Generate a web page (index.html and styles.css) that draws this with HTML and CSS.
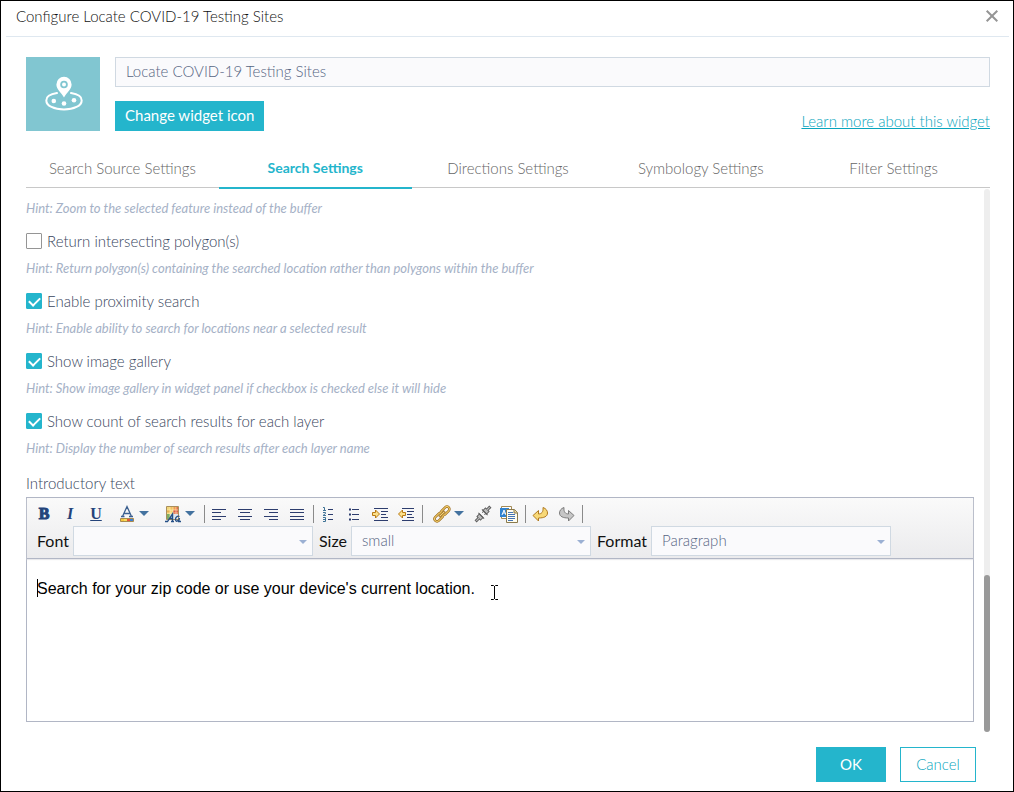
FILE: index.html
```html
<!DOCTYPE html>
<html lang="en">
<head>
    <meta charset="UTF-8">
    <meta name="viewport" content="width=device-width, initial-scale=1.0">
    <title>Configure Locate COVID-19 Testing Sites</title>
    <link rel="stylesheet" href="styles.css">
</head>
<body>
    <div class="dialog">
        <header class="dialog-title">
            <h1>Configure Locate COVID-19 Testing Sites</h1>
            <button class="close" aria-label="Close">
                <svg width="12" height="12" viewBox="0 0 12 12"><path d="M.7.7l10.600 10.600M11.300.7L.7 11.300" stroke="#959595" stroke-width="2" fill="none"/></svg>
            </button>
        </header>

        <main class="dialog-body">
            <section class="widget-info">
                <div class="widget-icon">
                    <svg width="42" height="36" viewBox="-2 0 42 36">
                        <path d="M13 17.100C7 18 2.300 20.300 2.300 24.400c0 5.400 7.900 9 17.700 9s17.700-3.600 17.700-9c0-4.100-4.700-6.400-10.700-7.300" fill="none" stroke="#fff" stroke-width="2" stroke-linecap="round"/>
                        <path fill="#fff" fill-rule="evenodd" d="M20 .8a7.600 7.600 0 0 0-7.600 7.600c0 5 4.400 7.200 7.600 13 3.200-5.800 7.600-8 7.600-13A7.600 7.600 0 0 0 20 .8zm0 3.900a3.800 3.800 0 1 1 0 7.600 3.800 3.800 0 0 1 0-7.600z"/>
                        <circle cx="20" cy="8.500" r="2" fill="#fff"/>
                        <circle cx="9.800" cy="25" r="2.300" fill="#fff"/>
                        <circle cx="20" cy="27.500" r="2.300" fill="#fff"/>
                        <circle cx="30" cy="24.300" r="2.300" fill="#fff"/>
                    </svg>
                </div>
                <div class="widget-fields">
                    <input type="text" class="widget-name" aria-label="Widget name" value="Locate COVID-19 Testing Sites">
                    <div class="widget-actions">
                        <button class="btn change-icon">Change widget icon</button>
                        <a href="#" class="learn-more">Learn more about this widget</a>
                    </div>
                </div>
            </section>

            <nav class="tabs">
                <button class="tab">Search Source Settings</button>
                <button class="tab active">Search Settings</button>
                <button class="tab">Directions Settings</button>
                <button class="tab">Symbology Settings</button>
                <button class="tab">Filter Settings</button>
            </nav>

            <div class="panel">
                <div class="settings">
                    <p class="hint">Hint: Zoom to the selected feature instead of the buffer</p>
                    <div class="option">
                        <label><input type="checkbox">Return intersecting polygon(s)</label>
                        <p class="hint">Hint: Return polygon(s) containing the searched location rather than polygons within the buffer</p>
                    </div>
                    <div class="option">
                        <label><input type="checkbox" checked>Enable proximity search</label>
                        <p class="hint">Hint: Enable ability to search for locations near a selected result</p>
                    </div>
                    <div class="option">
                        <label><input type="checkbox" checked>Show image gallery</label>
                        <p class="hint">Hint: Show image gallery in widget panel if checkbox is checked else it will hide</p>
                    </div>
                    <div class="option">
                        <label><input type="checkbox" checked>Show count of search results for each layer</label>
                        <p class="hint">Hint: Display the number of search results after each layer name</p>
                    </div>

                    <div class="intro-label" id="introLabel">Introductory text</div>
                    <div class="editor">
                        <div class="toolbar">
                            <div class="tools">
                                <button class="tool letter bold" aria-label="Bold">B</button>
                                <button class="tool letter italic" aria-label="Italic">I</button>
                                <button class="tool letter underline" aria-label="Underline">U</button>
                                <button class="tool drop" aria-label="Text color">
                                    <svg width="16" height="18" viewBox="0 0 16 18">
                                        <path d="M3.500 11.500L8 1.500l4.500 10M5 8.500h6M2 11.500h3.500M10 11.500h4" fill="none" stroke="#3c6090" stroke-width="1.300"/>
                                        <path d="M1.500 13.500h13v3h-13z" fill="#f4c63c" stroke="#a88a50"/>
                                        <path d="M5 14h3v2H5z" fill="#f6df5a"/><path d="M8 14h3v2H8z" fill="#e4543c"/><path d="M11 14h3v2h-3z" fill="#3d7fd0"/>
                                    </svg>
                                    <span class="caret"></span>
                                </button>
                                <button class="tool drop" aria-label="Background color">
                                    <svg width="16" height="18" viewBox="0 0 16 18">
                                        <path d="M1.500 1.500h12v13h-12z" fill="#f3d678" stroke="#a98f5c"/>
                                        <path d="M5 2h3v3H5z" fill="#f0c060"/><path d="M8 2h3v3H8z" fill="#ef9c50"/><path d="M11 2h2v3h-2z" fill="#e0704c"/>
                                        <path d="M2 5h3v3H2z" fill="#e9b24c"/><path d="M8 5h5v4H8z" fill="#dc5a48"/><path d="M2 9h3v5H2z" fill="#7fae62"/><path d="M5 9h4v5H5z" fill="#c3dbe8"/><path d="M9 9h4v5H9z" fill="#dfe5ef"/>
                                        <path d="M5 2v12M8 2v7M11 2v7M2 5h11M2 8h11" stroke="#fff1bd" stroke-width=".6"/>
                                        <path d="M0 16.500h2.500L7.500 9v7.500M4 13.500h3.500M6 16.500h3M14.500 11.500c-2-1-4 .6-4 2.800 0 3 2.800 2.500 4-1.300l-.8 3.500H16" fill="none" stroke="#244f86" stroke-width="1.300"/>
                                    </svg>
                                    <span class="caret"></span>
                                </button>
                                <span class="sep"></span>
                                <button class="tool" aria-label="Align left">
                                    <svg width="16" height="14" viewBox="0 0 16 14"><path d="M1 2.500h14M1 5.500h9M1 9.500h14M1 12.500h9" stroke="#2d3d6e"/></svg>
                                </button>
                                <button class="tool" aria-label="Align center">
                                    <svg width="16" height="14" viewBox="0 0 16 14"><path d="M1 2.500h14M3 5.500h10M1 9.500h14M3 12.500h10" stroke="#2d3d6e"/></svg>
                                </button>
                                <button class="tool" aria-label="Align right">
                                    <svg width="16" height="14" viewBox="0 0 16 14"><path d="M1 2.500h14M6 5.500h9M1 9.500h14M6 12.500h9" stroke="#2d3d6e"/></svg>
                                </button>
                                <button class="tool" aria-label="Justify">
                                    <svg width="16" height="14" viewBox="0 0 16 14"><path d="M1 2.500h14M1 5.500h14M1 9.500h14M1 12.500h14" stroke="#2d3d6e"/></svg>
                                </button>
                                <span class="sep"></span>
                                <button class="tool" aria-label="Numbered list">
                                    <svg width="12" height="16" viewBox="0 0 12 16">
                                        <path d="M6 3.500h5M6 8.500h5M6 13.500h5" stroke="#2d3d6e"/>
                                        <path d="M1 1.500h1.500v3M1 4.500h3M1 6.500h2.500v1L1 9.500h3M1 11.500h2.500v4H1M1 13.500h2" fill="none" stroke="#3f7396"/>
                                    </svg>
                                </button>
                                <button class="tool" aria-label="Bulleted list">
                                    <svg width="12" height="16" viewBox="0 0 12 16">
                                        <path d="M4 3.500h7M4 8.500h7M4 13.500h7" stroke="#2d3d6e"/>
                                        <path d="M1 2.500h2v2H1zM1 7.500h2v2H1zM1 12.500h2v2H1z" fill="#2d3d6e"/>
                                    </svg>
                                </button>
                                <button class="tool" aria-label="Indent">
                                    <svg width="18" height="14" viewBox="0 0 18 14">
                                        <path d="M3 1.500h14M10 4.500h7M10 7.500h5M10 10.500h7M3 13.500h14" stroke="#2d3d6e"/>
                                        <path d="M1.500 5.500h3v-2.500l4 4-4 4V8.500h-3z" fill="#fbe08a" stroke="#b97a14"/>
                                    </svg>
                                </button>
                                <button class="tool" aria-label="Outdent">
                                    <svg width="18" height="14" viewBox="0 0 18 14">
                                        <path d="M5 1.500h12M10 4.500h7M10 7.500h5M10 10.500h7M5 13.500h12" stroke="#2d3d6e"/>
                                        <path d="M8.500 5.500h-3v-2.500l-4 4 4 4V8.500h3z" fill="#fbe08a" stroke="#b97a14"/>
                                    </svg>
                                </button>
                                <span class="sep"></span>
                                <button class="tool drop" aria-label="Insert link">
                                    <svg width="16" height="16" viewBox="0 0 16 16">
                                        <g transform="rotate(-45 8 8)" fill="none">
                                            <path d="M1 5.500h5a2.500 2.500 0 0 1 0 5H1a2.500 2.500 0 0 1 0-5zM10 5.500h5a2.500 2.500 0 0 1 0 5h-5a2.500 2.500 0 0 1 0-5z" stroke="#9c6a1a" stroke-width="2.400"/>
                                            <path d="M1 5.500h5a2.500 2.500 0 0 1 0 5H1a2.500 2.500 0 0 1 0-5zM10 5.500h5a2.500 2.500 0 0 1 0 5h-5a2.500 2.500 0 0 1 0-5z" stroke="#f2cf6c"/>
                                            <path d="M4 8h8" stroke="#9c6a1a" stroke-width="2.400"/>
                                            <path d="M4.500 8h7" stroke="#f7dc88"/>
                                        </g>
                                    </svg>
                                    <span class="caret"></span>
                                </button>
                                <button class="tool" aria-label="Remove link">
                                    <svg width="16" height="16" viewBox="0 0 16 16">
                                        <g transform="rotate(-45 8 8)" fill="#bdbdbd" stroke="#5f5f5f">
                                            <path d="M-2 7h4V5.500h3.500v5H2V9h-4z"/>
                                            <path d="M5.500 4v8"/>
                                            <path d="M18 7h-4V5.500h-3.500v5H14V9h4z"/>
                                            <path d="M10.500 4v8M8.500 6.500h2M8.500 9.500h2"/>
                                        </g>
                                    </svg>
                                </button>
                                <button class="tool" aria-label="Paste from Word">
                                    <svg width="20" height="18" viewBox="0 0 20 18">
                                        <path d="M2.500 1.500h10v12h-10z" fill="#fff" stroke="#a38a55"/>
                                        <path d="M1 3h9v9H1z" fill="#2f82cf"/>
                                        <path d="M3 10l2-5 2 5M4 8h2" fill="none" stroke="#fff"/>
                                        <path d="M7.500 4.500h8l3 3v10h-11z" fill="#fffdf0" stroke="#8b7a4b"/>
                                        <path d="M15 4.500v3.500h3.500" fill="#ead9a2" stroke="#8b7a4b"/>
                                        <path d="M9 7.500h5M9 9.500h7M9 11.500h7M9 13.500h7M9 15.500h5" stroke="#4675b5"/>
                                    </svg>
                                </button>
                                <span class="sep"></span>
                                <button class="tool" aria-label="Undo">
                                    <svg width="17" height="16" viewBox="0 0 17 16"><path d="M1 9.500l5.500-5V8c3 0 5-2 4.500-6.500 3 1 4.500 3.200 4.500 5.500 0 3.500-3.500 5-9 5v3z" fill="#f8d978" stroke="#b07a20" stroke-linejoin="round"/></svg>
                                </button>
                                <button class="tool" aria-label="Redo">
                                    <svg width="17" height="16" viewBox="0 0 17 16"><path d="M16 9.500l-5.500-5V8C7.500 8 5.500 6 6 1.500 3 2.500 1.500 4.700 1.500 7c0 3.500 3.500 5 9 5v3z" fill="#c6c6c6" stroke="#7d7d7d" stroke-linejoin="round"/></svg>
                                </button>
                                <span class="sep"></span>
                            </div>
                            <div class="selects">
                                <label for="fontSelect">Font</label>
                                <span class="select-box">
                                    <select id="fontSelect"><option></option></select>
                                </span>
                                <label for="sizeSelect">Size</label>
                                <span class="select-box">
                                    <select id="sizeSelect"><option>small</option></select>
                                </span>
                                <label for="formatSelect">Format</label>
                                <span class="select-box">
                                    <select id="formatSelect"><option>Paragraph</option></select>
                                </span>
                            </div>
                        </div>
                        <div class="editor-text" contenteditable="true" role="textbox" aria-labelledby="introLabel"><span class="text-cursor"></span>Search for your zip code or use your device's current location.<svg class="pointer" width="9" height="17" viewBox="0 0 9 17"><path d="M1 1.500h2.500l1 1 1-1H8M4.500 2v13M1 15.500h2.500l1-1 1 1H8" fill="none" stroke="#000"/></svg></div>
                    </div>
                </div>
                <div class="scroll-track"><div class="scroll-thumb"></div></div>
            </div>
        </main>

        <footer class="dialog-footer">
            <button class="btn ok">OK</button>
            <button class="btn cancel">Cancel</button>
        </footer>
    </div>
</body>
</html>
```

FILE: styles.css
```css
* {
    box-sizing: border-box;
}
body {
    margin: 0;
    font-family: Lato, "Open Sans", sans-serif;
    font-size: 15px;
    font-weight: 300;
    line-height: 20px;
    color: #37455c;
    background-color: #fff;
}
button, input, select {
    font: inherit;
    margin: 0;
}
button {
    padding: 0;
    border: none;
    background: none;
    cursor: pointer;
}
svg {
    display: block;
    flex: none;
    overflow: visible;
}
.dialog {
    display: flex;
    flex-direction: column;
    min-height: 100vh;
    border: 1px solid #000;
}
.dialog-title {
    display: flex;
    align-items: center;
    justify-content: space-between;
    margin: 0 4px 0 5px;
    padding: 5px 9px 10px 10px;
    border-bottom: 1px solid #dfe8f0;
}
.dialog-title h1 {
    margin: 0;
    font-size: 15px;
    font-weight: 300;
    color: #111;
}
.close {
    padding: 2px;
}
.dialog-body {
    flex: 1;
    display: flex;
    flex-direction: column;
    padding: 20px 23px 0 25px;
}
.widget-info {
    display: flex;
    gap: 15px;
}
.widget-icon {
    display: flex;
    align-items: center;
    justify-content: center;
    width: 74px;
    height: 74px;
    background-color: #81c6d1;
}
.widget-fields {
    flex: 1;
    display: flex;
    flex-direction: column;
    gap: 14px;
}
.widget-name {
    width: 100%;
    height: 30px;
    padding: 0 10px 2px;
    border: 1px solid #d0d9e2;
    background-color: #fafafc;
    color: #566583;
}
.widget-actions {
    display: flex;
    align-items: flex-end;
    justify-content: space-between;
}
.btn {
    border: 1px solid #24b5cc;
    background-color: #24b5cc;
    color: #fff;
}
.change-icon {
    height: 30px;
    padding: 0 9px 2px;
    font-weight: 400;
}
.learn-more {
    color: #08a5bd;
}
.tabs {
    display: flex;
    margin-top: 17px;
    border-bottom: 1px solid #c8c8c8;
}
.tab {
    flex: 1;
    height: 41px;
    margin-bottom: -2px;
    border-bottom: 2px solid transparent;
    color: #666;
}
.tab.active {
    border-bottom-color: #24b5cc;
    color: #24b5cc;
    font-size: 14px;
    font-weight: 700;
}
.panel {
    flex: 1;
    display: flex;
    gap: 10px;
    padding-top: 1px;
}
.settings {
    flex: 1;
    display: flex;
    flex-direction: column;
    padding: 9px 0 10px;
}
.hint {
    margin: 0;
    font-size: 13px;
    font-style: italic;
    font-weight: 400;
    color: #a5b1c6;
}
.option {
    display: flex;
    flex-direction: column;
    gap: 7px;
    margin-top: 13px;
}
.option label {
    display: flex;
    align-items: center;
    gap: 5px;
}
.option input {
    appearance: none;
    display: flex;
    justify-content: center;
    width: 16px;
    height: 16px;
    border: 1px solid #959595;
    border-radius: 1px;
    background-color: #fff;
}
.option input:checked {
    border-color: #24b5cc;
    background-color: #24b5cc;
}
.option input:checked::after {
    content: "";
    width: 5px;
    height: 9px;
    margin-top: 1px;
    border: solid #fff;
    border-width: 0 2px 2px 0;
    transform: rotate(45deg);
}
.intro-label {
    margin: 15px 0 4px;
}
.editor {
    flex: 1;
    display: flex;
    flex-direction: column;
    border: 1px solid #b1b6c5;
}
.toolbar {
    padding: 3px 4px 2px;
    border-bottom: 1px solid #b1b6c5;
    background: linear-gradient(#fafafa, #ebebed);
    box-shadow: 0 1px 1px #e9e9ec;
}
.tools {
    display: flex;
    align-items: center;
    height: 25px;
}
.tool {
    display: flex;
    align-items: center;
    justify-content: center;
    width: 26px;
    height: 25px;
}
.tool.drop {
    gap: 4px;
    width: 46px;
    padding-left: 3px;
}
.letter {
    font: 16px "Liberation Serif", serif;
    color: #24437a;
}
.bold {
    font-weight: 700;
    -webkit-text-stroke: 1px #24437a;
}
.italic {
    font-style: italic;
    font-weight: 700;
}
.underline {
    font-weight: 700;
    text-decoration: underline;
}
.caret {
    border: 5px solid transparent;
    border-top-color: #43729f;
    border-bottom: none;
}
.sep {
    width: 1px;
    height: 18px;
    margin: 0 1px 0 3px;
    background-color: #8a8a8a;
}
.selects {
    display: flex;
    align-items: center;
    padding-left: 6px;
}
.selects label {
    margin-right: 4px;
    font-size: 16px;
    font-weight: 400;
    color: #111;
}
.select-box {
    position: relative;
    width: 240px;
    margin-right: 6px;
}
.select-box::after {
    content: "";
    position: absolute;
    right: 6px;
    top: 14px;
    border: 4px solid transparent;
    border-top-color: #9bb0d3;
    border-bottom: none;
    pointer-events: none;
}
.select-box select {
    appearance: none;
    display: block;
    width: 100%;
    height: 30px;
    padding: 0 20px 2px 10px;
    border: 1px solid #d0d9e2;
    border-radius: 0;
    background-color: #fafafc;
    color: #566583;
}
.editor-text {
    flex: 1;
    display: flex;
    align-items: flex-start;
    padding: 20px 10px;
    font: 16px/20px "Liberation Sans", Arial, sans-serif;
    color: #000;
    outline: none;
}
.text-cursor {
    width: 1px;
    height: 18px;
    margin-right: -1px;
    background-color: #000;
}
.pointer {
    margin: 5px 0 0 15px;
}
.scroll-track {
    display: flex;
    align-items: flex-end;
    width: 6px;
    border-radius: 3px;
    background-color: #eee;
}
.scroll-thumb {
    width: 100%;
    height: 29%;
    border-radius: 3px;
    background-color: #999;
}
.dialog-footer {
    display: flex;
    justify-content: flex-end;
    gap: 14px;
    padding: 15px 37px 9px;
}
.dialog-footer .btn {
    height: 35px;
    padding-bottom: 1px;
}
.dialog-footer .ok {
    width: 70px;
    font-weight: 400;
}
.dialog-footer .cancel {
    width: 76px;
    background-color: #fff;
    color: #08a5bd;
}
```
